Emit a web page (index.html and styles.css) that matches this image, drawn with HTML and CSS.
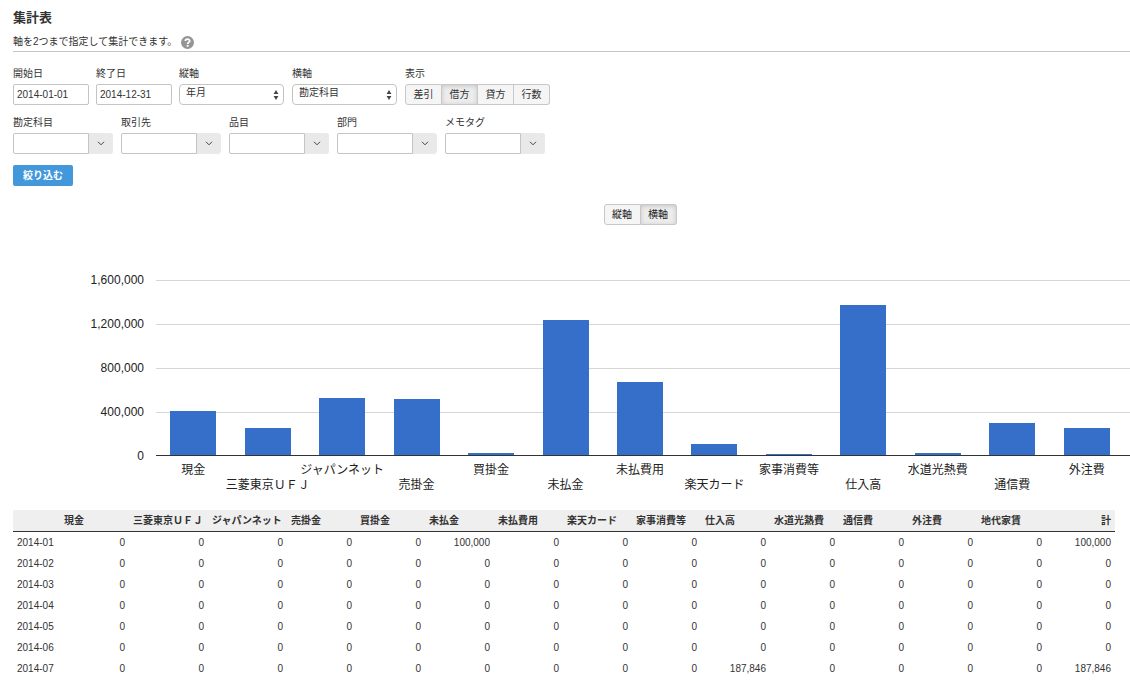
FILE: index.html
```html
<!DOCTYPE html>
<html lang="ja">
<head>
<meta charset="utf-8">
<title>集計表</title>
<link rel="stylesheet" href="styles.css">
</head>
<body>
<main class="page">
  <header class="page-head">
    <h1 class="title">集計表</h1>
    <p class="lead">軸を2つまで指定して集計できます。
      <svg class="help" viewBox="0 0 13 13" aria-hidden="true"><circle cx="6.5" cy="6.5" r="6.5" fill="#959595"/><path d="M4.4 5.1C4.4 2.5 8.7 2.5 8.7 5 8.7 6.4 6.6 6.4 6.6 8" fill="none" stroke="#fff" stroke-width="1.8"/><rect x="5.7" y="8.9" width="1.9" height="1.8" fill="#fff"/></svg>
    </p>
  </header>

  <form class="filters">
    <div class="row">
      <div class="field"><label for="from">開始日</label><input class="box" id="from" type="text" value="2014-01-01"></div>
      <div class="field"><label for="to">終了日</label><input class="box" id="to" type="text" value="2014-12-31"></div>
      <div class="field"><label for="vaxis">縦軸</label>
        <div class="picker"><select id="vaxis"><option>年月</option></select><svg class="updown" viewBox="0 0 6 10" aria-hidden="true"><path d="M3 0 5.4 4H.6zM3 10 .6 6h4.8z"/></svg></div></div>
      <div class="field"><label for="haxis">横軸</label>
        <div class="picker"><select id="haxis"><option>勘定科目</option></select><svg class="updown" viewBox="0 0 6 10" aria-hidden="true"><path d="M3 0 5.4 4H.6zM3 10 .6 6h4.8z"/></svg></div></div>
      <div class="field"><span class="label" id="show">表示</span>
        <div class="toggle" role="group" aria-labelledby="show"><button type="button">差引</button><button type="button" class="on">借方</button><button type="button">貸方</button><button type="button">行数</button></div></div>
    </div>
    <div class="row combos">
      <div class="field"><label for="c1">勘定科目</label><div class="combo"><input class="box" id="c1" type="text"><button type="button" aria-label="勘定科目"><svg viewBox="0 0 8 5"><path d="M1 .8 4 3.8 7 .8"/></svg></button></div></div>
      <div class="field"><label for="c2">取引先</label><div class="combo"><input class="box" id="c2" type="text"><button type="button" aria-label="取引先"><svg viewBox="0 0 8 5"><path d="M1 .8 4 3.8 7 .8"/></svg></button></div></div>
      <div class="field"><label for="c3">品目</label><div class="combo"><input class="box" id="c3" type="text"><button type="button" aria-label="品目"><svg viewBox="0 0 8 5"><path d="M1 .8 4 3.8 7 .8"/></svg></button></div></div>
      <div class="field"><label for="c4">部門</label><div class="combo"><input class="box" id="c4" type="text"><button type="button" aria-label="部門"><svg viewBox="0 0 8 5"><path d="M1 .8 4 3.8 7 .8"/></svg></button></div></div>
      <div class="field"><label for="c5">メモタグ</label><div class="combo"><input class="box" id="c5" type="text"><button type="button" aria-label="メモタグ"><svg viewBox="0 0 8 5"><path d="M1 .8 4 3.8 7 .8"/></svg></button></div></div>
    </div>
    <button class="submit" type="submit">絞り込む</button>
  </form>

  <section class="chart">
    <div class="chart-switch"><div class="toggle"><button type="button">縦軸</button><button type="button" class="on">横軸</button></div></div>
    <div class="scale"><span>1,600,000</span><span>1,200,000</span><span>800,000</span><span>400,000</span><span>0</span></div>
    <div class="plot">
      <div class="bar" style="height:25.4%"></div>
      <div class="bar" style="height:15.5%"></div>
      <div class="bar" style="height:32.7%"></div>
      <div class="bar" style="height:31.8%"></div>
      <div class="bar" style="height:1.2%"></div>
      <div class="bar" style="height:77.4%"></div>
      <div class="bar" style="height:42%"></div>
      <div class="bar" style="height:6.2%"></div>
      <div class="bar" style="height:.6%"></div>
      <div class="bar" style="height:85.7%"></div>
      <div class="bar" style="height:1.2%"></div>
      <div class="bar" style="height:18.5%"></div>
      <div class="bar" style="height:15.2%"></div>
    </div>
    <div class="names">
      <span>現金</span><span>三菱東京ＵＦＪ</span><span>ジャパンネット</span><span>売掛金</span><span>買掛金</span><span>未払金</span><span>未払費用</span><span>楽天カード</span><span>家事消費等</span><span>仕入高</span><span>水道光熱費</span><span>通信費</span><span>外注費</span>
    </div>
  </section>

  <table class="summary">
    <colgroup><col class="month"><col><col class="wide"><col class="wide"><col span="12"></colgroup>
    <thead>
      <tr><th></th><th>現金</th><th>三菱東京ＵＦＪ</th><th>ジャパンネット</th><th>売掛金</th><th>買掛金</th><th>未払金</th><th>未払費用</th><th>楽天カード</th><th>家事消費等</th><th>仕入高</th><th>水道光熱費</th><th>通信費</th><th>外注費</th><th>地代家賃</th><th class="total">計</th></tr>
    </thead>
    <tbody>
      <tr><th>2014-01</th><td>0</td><td>0</td><td>0</td><td>0</td><td>0</td><td>100,000</td><td>0</td><td>0</td><td>0</td><td>0</td><td>0</td><td>0</td><td>0</td><td>0</td><td>100,000</td></tr>
      <tr><th>2014-02</th><td>0</td><td>0</td><td>0</td><td>0</td><td>0</td><td>0</td><td>0</td><td>0</td><td>0</td><td>0</td><td>0</td><td>0</td><td>0</td><td>0</td><td>0</td></tr>
      <tr><th>2014-03</th><td>0</td><td>0</td><td>0</td><td>0</td><td>0</td><td>0</td><td>0</td><td>0</td><td>0</td><td>0</td><td>0</td><td>0</td><td>0</td><td>0</td><td>0</td></tr>
      <tr><th>2014-04</th><td>0</td><td>0</td><td>0</td><td>0</td><td>0</td><td>0</td><td>0</td><td>0</td><td>0</td><td>0</td><td>0</td><td>0</td><td>0</td><td>0</td><td>0</td></tr>
      <tr><th>2014-05</th><td>0</td><td>0</td><td>0</td><td>0</td><td>0</td><td>0</td><td>0</td><td>0</td><td>0</td><td>0</td><td>0</td><td>0</td><td>0</td><td>0</td><td>0</td></tr>
      <tr><th>2014-06</th><td>0</td><td>0</td><td>0</td><td>0</td><td>0</td><td>0</td><td>0</td><td>0</td><td>0</td><td>0</td><td>0</td><td>0</td><td>0</td><td>0</td><td>0</td></tr>
      <tr><th>2014-07</th><td>0</td><td>0</td><td>0</td><td>0</td><td>0</td><td>0</td><td>0</td><td>0</td><td>0</td><td>187,846</td><td>0</td><td>0</td><td>0</td><td>0</td><td>187,846</td></tr>
    </tbody>
  </table>
</main>
</body>
</html>
```
FILE: styles.css
```css
* { box-sizing: border-box; }

body {
  margin: 0;
  background: #fff;
  color: #333;
  font: 10px/16px "Liberation Sans", "Noto Sans CJK JP", sans-serif;
}

input, select, button { font: inherit; color: inherit; margin: 0; }

.page { padding: 8px 0 0 13px; }

/* heading */
.page-head { border-bottom: 1px solid #c4c4c4; padding-bottom: 1px; }
.title { margin: 0 0 6px; font-size: 13px; line-height: 20px; }
.lead { display: flex; align-items: center; gap: 4px; margin: 0; }
.help { width: 13px; height: 13px; }

/* filters */
.filters { padding-top: 14px; }
.row { display: flex; gap: 7px; margin-bottom: 10px; }
.combos { gap: 8px; margin-bottom: 11px; }
.field { display: flex; flex-direction: column; gap: 2px; }
.field label, .label { line-height: 16px; }
.box {
  width: 76px;
  height: 21px;
  padding: 0 3px;
  border: 1px solid #c4c4c4;
  border-radius: 2px;
  background: #fff;
}
.picker { position: relative; padding-right: 1px; }
.picker select {
  display: block;
  width: 105px;
  height: 21px;
  padding: 0 16px 4px 6px;
  border: 1px solid #c4c4c4;
  border-radius: 4px;
  background: #fff;
  appearance: none;
}
.updown {
  position: absolute;
  right: 6px;
  top: 6px;
  width: 6px;
  height: 10px;
  fill: #444;
  pointer-events: none;
}
.combo { display: flex; width: 100px; }
.combo .box { border-radius: 2px 0 0 2px; }
.combo button {
  flex: 1;
  display: flex;
  align-items: center;
  justify-content: center;
  padding: 0;
  border: 0;
  border-radius: 0 3px 3px 0;
  background: #e9e9e9;
}
.combo svg { width: 8px; height: 5px; fill: none; stroke: #444; }

.toggle { display: flex; }
.toggle button {
  width: 37px;
  height: 21px;
  padding: 0;
  border: 1px solid #c8c8c8;
  background: #f5f5f5;
}
.toggle button + button { width: 36px; border-left: 0; }
.toggle button:first-child { border-radius: 3px 0 0 3px; }
.toggle button:last-child { border-radius: 0 3px 3px 0; }
.toggle .on { background: #ececec; box-shadow: inset 0 1px 4px #c4c4c4; }

.submit {
  display: block;
  width: 60px;
  height: 21px;
  padding: 0;
  border: 0;
  border-radius: 2px;
  background: #4298db;
  color: #fff;
  font-weight: bold;
}

/* chart */
.chart {
  display: grid;
  grid-template-columns: 131px 1fr;
  column-gap: 12px;
  margin-top: 18px;
  color: #222;
  font-size: 12px;
}
.chart-switch {
  grid-column: 2;
  display: flex;
  justify-content: center;
  padding-right: 6px;
  margin-bottom: 47px;
  font-size: 10px;
}
.scale {
  display: flex;
  flex-direction: column;
  gap: 28px;
  height: 184px;
  text-align: right;
}
.plot {
  display: grid;
  grid-template-columns: repeat(13, 1fr);
  align-items: end;
  height: 176px;
  margin-top: 8px;
  padding-right: 6px;
  border-bottom: 1px solid #333;
  background: repeating-linear-gradient(#d6d6d6 0 1px, transparent 1px 44px);
}
.bar { width: 46px; justify-self: center; background: #356fc9; }
.names {
  grid-column: 2;
  display: grid;
  grid-template-columns: repeat(13, 1fr);
  padding: 6px 6px 0 0;
}
.names span {
  display: flex;
  justify-content: center;
  min-width: 0;
  white-space: nowrap;
}
.names span:nth-child(even) { padding-top: 15px; }

/* table */
.summary {
  width: calc(100% - 15px);
  margin-top: 17px;
  border-collapse: separate;
  border-spacing: 0;
  table-layout: fixed;
}
.month { width: 47px; }
.wide { width: 79px; }
.summary th, .summary td {
  height: 21px;
  padding: 0 4px;
  line-height: 16px;
  text-align: right;
  white-space: nowrap;
}
.summary th { text-align: left; }
.summary tbody th { font-weight: normal; }
.summary thead th {
  height: 22px;
  background: #efefef;
  border-bottom: 1px solid #333;
}
.summary thead .total { text-align: right; }
```
